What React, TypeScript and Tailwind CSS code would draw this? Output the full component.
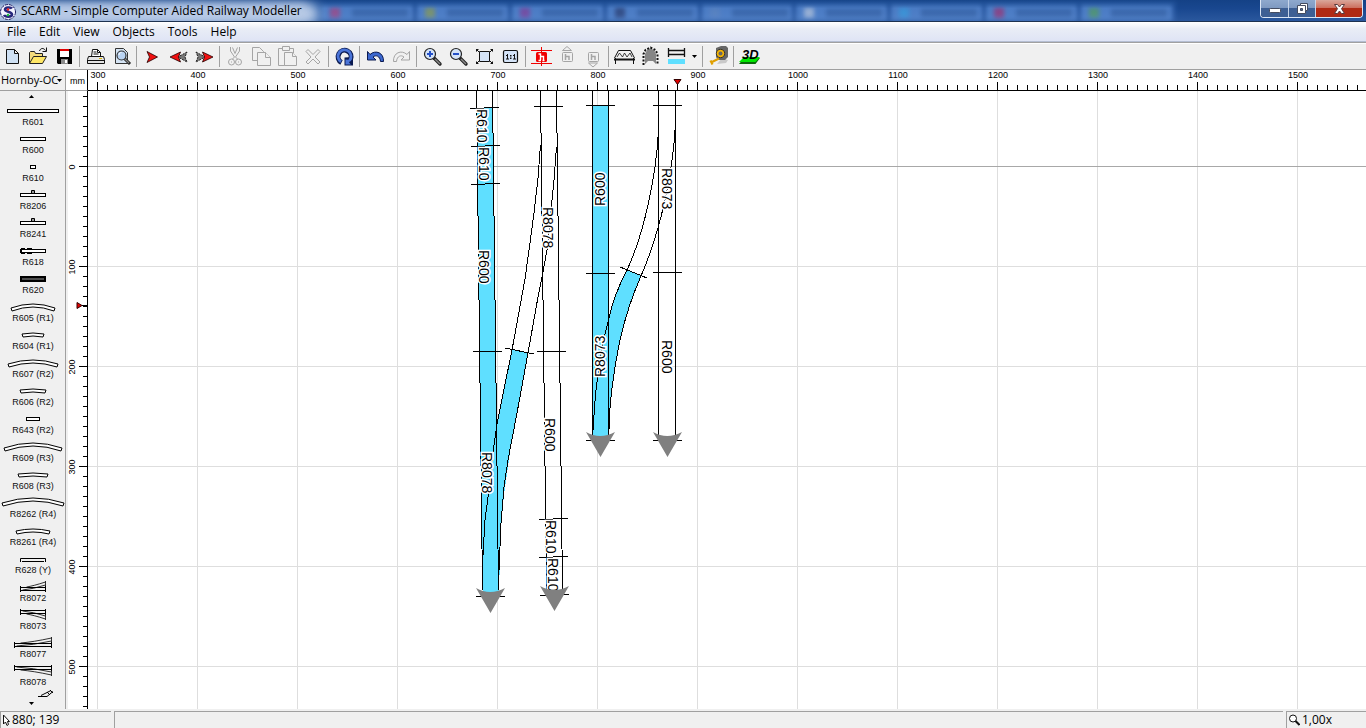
import type { ReactNode } from 'react';

const menuItems = ['File', 'Edit', 'View', 'Objects', 'Tools', 'Help'];

// blurred browser tabs that shine through the glass title bar
const glassTabs = ['#c0306a', '#9aa030', '#902a8a', '#202a58', '#5f83bc', '#cfd5e0', '#2f9fe0', '#b01a5a', '#50a040'];

/* ---------- toolbar icons, 24x24 ---------- */

const GRAY = '#a5a5a5';

function MagnifierIcon({ plus }: { plus?: boolean }) {
  return (
    <>
      <path d="M14 14l6 6" stroke="#222" strokeWidth="3.4" strokeLinecap="round" />
      <path d="M15 15l5 5" stroke="#8a8a8a" strokeWidth="1.4" />
      <circle cx="10" cy="10" r="5.5" fill="#d4e3f7" stroke="#222" strokeWidth="1.2" />
      <path d="M7 10h6" stroke="#2450c8" strokeWidth="2" />
      {plus && <path d="M10 7v6" stroke="#2450c8" strokeWidth="2" />}
    </>
  );
}

const toolGroups: { name: string; icon: ReactNode }[][] = [
  [
    { name: 'New', icon: <path d="M6.5 5.5h8l4 4v10h-12z M14.5 5.5v4h4" fill="#cfe1f4" stroke="#111" /> },
    {
      name: 'Open',
      icon: (
        <>
          <path d="M3.500 19V8.500l1-1h4l1 2h7v3" fill="#f4dc7c" stroke="#222" />
          <path d="M3.500 19.500l4-7h13l-4 7z" fill="#ffe766" stroke="#222" />
          <path d="M13.500 7c1-3 4-3.500 6-.500M20.500 3.500v4h-4" fill="none" stroke="#111" />
        </>
      ),
    },
    {
      name: 'Save',
      icon: (
        <>
          <path d="M5 5h15v15H6l-1-1z" fill="#000" />
          <path d="M8 5h9v2H8z" fill="#e00000" />
          <path d="M8 7h9v6H8z" fill="#fff" />
          <path d="M9 15h7v5H9z" fill="#8a8a8a" />
          <path d="M13 16h2v3h-2z" fill="#fff" />
        </>
      ),
    },
  ],
  [
    {
      name: 'Print',
      icon: (
        <>
          <path d="M8.500 12.500l1-7h5l3 3v4" fill="#fff" stroke="#111" />
          <path d="M10.500 8h3M10.500 10h5M14.500 5.500v3h3" stroke="#111" fill="none" />
          <path d="M5.500 12.500h15l1 3v4h-17v-4z" fill="#e4e4e4" stroke="#111" />
          <path d="M5 16.500h16" stroke="#111" />
          <path d="M16 14.500h3" stroke="#d8b400" />
        </>
      ),
    },
    {
      name: 'Print preview',
      icon: (
        <>
          <path d="M6.500 4.500h8l4 4v11h-12z" fill="#d5e4f4" stroke="#333" />
          <path d="M15 14l6 6" stroke="#222" strokeWidth="3" />
          <path d="M15 14l5 5" stroke="#888" strokeWidth="1.200" />
          <circle cx="12.500" cy="11.500" r="4.500" fill="#b9d3f2" stroke="#333" strokeWidth="1.200" />
          <path d="M10 11c0-1.500 1-2.500 2.500-2.500" stroke="#fff" fill="none" />
        </>
      ),
    },
  ],
  [
    { name: 'Start point', icon: <path d="M7 7.500L17.500 13L7 18.500L9.500 13z" fill="#f01010" stroke="#200" strokeWidth=".8" /> },
    {
      name: 'Previous point',
      icon: (
        <>
          <path d="M21 8L12 13l9 5l-2-5z" fill="#777" stroke="#222" strokeDasharray="2 1" />
          <path d="M14.500 8L4 13l10.500 5l-2-5z" fill="#f01010" stroke="#200" strokeWidth=".8" />
        </>
      ),
    },
    {
      name: 'Next point',
      icon: (
        <>
          <path d="M4 8l9 5l-9 5l2-5z" fill="#777" stroke="#222" strokeDasharray="2 1" />
          <path d="M10.500 8L21 13l-10.500 5l2-5z" fill="#f01010" stroke="#200" strokeWidth=".8" />
        </>
      ),
    },
  ],
  [
    {
      name: 'Cut',
      icon: (
        <g fill="none" stroke={GRAY}>
          <path d="M7.500 3v4l4 6l-2 2M16.500 3v4l-4 6l2 2M9.500 3.500l2.500 6l2.500-6" />
          <circle cx="8.500" cy="18" r="3" />
          <circle cx="15.500" cy="18" r="3" />
          <path d="M8 18h1M15 18h1" />
        </g>
      ),
    },
    {
      name: 'Copy',
      icon: (
        <g fill="#f0f0f0" stroke={GRAY}>
          <path d="M3.500 3.500h7l4 4v9h-11z" />
          <path d="M8.500 8.500h8l5 5v8h-13z" />
          <path d="M16.500 8.500v5h5" />
        </g>
      ),
    },
    {
      name: 'Paste',
      icon: (
        <g fill="#f0f0f0" stroke={GRAY}>
          <path d="M3.500 4.500h15v17h-15z" />
          <path d="M7.500 2.500h7v4h-7z" />
          <path d="M9.500 8.500h8l4 4v9h-12z" />
          <path d="M17.500 8.500v4h4" />
        </g>
      ),
    },
    { name: 'Delete', icon: <path d="M5 7.500l2-2l5 5l5-5l2 2l-5 5.500l5 5l-2 2l-5-5l-5 5l-2-2l5-5z" fill="#f0f0f0" stroke={GRAY} /> },
  ],
  [
    {
      name: 'Rotate',
      icon: (
        <>
          <path d="M9.500 18.500A6.500 6.500 0 1 1 18.500 15.500" stroke="#0a1a50" strokeWidth="5" />
          <path d="M12.500 13.500v8h8.500v-8.500z" fill="#0a1a50" />
          <path d="M9 17.800A6.500 6.500 0 1 1 17.500 16.500" stroke="#4a74d8" strokeWidth="2.800" />
          <path d="M13.500 15.500v5h5.500l-2-2l2-2.500z" fill="#4a74d8" />
        </>
      ),
    },
  ],
  [
    {
      name: 'Undo',
      icon: <path d="M4.500 7.500v8.500h8.500l-3-3c3-2.500 7-1 7.500 4.500h3c.5-9-8-12-13.500-7z" fill="#3c68d0" stroke="#0a1a50" />,
    },
    {
      name: 'Redo',
      icon: <path d="M20.500 7.500v8.500H12l3-3c-3-2.500-7-1-7.500 4.500h-3c-.5-9 8-12 13.500-7z" fill="#f0f0f0" stroke={GRAY} />,
    },
  ],
  [
    { name: 'Zoom in', icon: <MagnifierIcon plus /> },
    { name: 'Zoom out', icon: <MagnifierIcon /> },
    {
      name: 'Fit to window',
      icon: (
        <>
          <path d="M7.500 7.500h10v10h-10z" fill="#d4e3f7" stroke="#111" />
          <path d="M4 5h3l-3 3zM21 5h-3l3 3zM4 20h3l-3-3zM21 20h-3l3-3z" fill="#111" />
          <path d="M4.500 5.500l3 3M20.500 5.500l-3 3M4.500 19.500l3-3M20.500 19.500l-3-3" stroke="#111" />
        </>
      ),
    },
    {
      name: 'Actual size',
      icon: (
        <>
          <rect x="5.500" y="6.500" width="14" height="12" rx="1.500" fill="#d4e3f7" stroke="#111" strokeWidth="1.200" />
          <path d="M8 11.500h1.500M9.500 10v5M8 15h3M15 11.500h1.500M16.500 10v5M15 15h3" stroke="#111" />
          <path d="M12 11h1.500v1.500H12zM12 13.500h1.500V15H12z" fill="#111" />
        </>
      ),
    },
  ],
  [
    {
      name: 'Height',
      icon: (
        <>
          <path d="M2 6.500h21M2 19.500h21M12.500 3v19" stroke="#f00000" />
          <rect x="7" y="8" width="11" height="10" rx="1.500" fill="#f00000" />
          <path d="M9.500 10h2v6M11.500 12.500h3V16M9.500 16.500h2.500M13.500 16.500h2" fill="none" stroke="#fff" strokeWidth="1.400" />
        </>
      ),
    },
    {
      name: 'Raise',
      icon: (
        <g fill="none" stroke={GRAY}>
          <path d="M7.500 6.500l4.500-4l4.500 4z" />
          <rect x="7.500" y="8.500" width="10" height="9" rx="1" />
          <path d="M10.500 10v6M10.500 12.500h3.500V16" strokeWidth="1.500" />
        </g>
      ),
    },
    {
      name: 'Lower',
      icon: (
        <g fill="none" stroke={GRAY}>
          <path d="M7.500 19l4.500 4l4.500-4z" />
          <rect x="7.500" y="8.500" width="10" height="9" rx="1" />
          <path d="M10.500 10v6M10.500 12.500h3.500V16" strokeWidth="1.500" />
        </g>
      ),
    },
  ],
  [
    {
      name: 'Bridge',
      icon: (
        <g fill="none" stroke="#111">
          <path d="M2.500 14l4-7.500h12l4 7.500" />
          <path d="M5 13l2.500-4l3 4l2-4l2.500 4l3-4l2 4" strokeWidth=".8" />
          <path d="M2 15.500h21" strokeWidth="2" />
          <path d="M3.500 14v6M21.500 14v6" />
        </g>
      ),
    },
    {
      name: 'Tunnel',
      icon: (
        <>
          <path d="M7 20V10l2-4l3.500-1.500L16 6l2 4v10l-3-3h-5z" fill="#858585" />
          <path d="M5.500 21V10l2-4l5-2.500l5 2.500l2 4v11" fill="none" stroke="#111" strokeWidth="2" strokeDasharray="2 1.500" />
        </>
      ),
    },
    {
      name: 'Track colour',
      icon: (
        <>
          <path d="M4 6.500h17M4 10.500h17M4.500 4v9M20.500 4v9" stroke="#111" strokeWidth="1.300" />
          <path d="M4 15h17v5H4z" fill="#5fdfff" />
        </>
      ),
    },
  ],
  [
    {
      name: 'Measure',
      icon: (
        <>
          <path d="M11 20l9-1l2-3l-6-2z" fill="#c9c9c9" />
          <path d="M10 4l5-2h5l2 2v9l-3 3h-7l-2-3z" fill="#666" />
          <circle cx="14.500" cy="9.500" r="4.200" fill="#f4b400" stroke="#333" />
          <circle cx="14.500" cy="9.500" r="2" fill="#666" />
          <path d="M13 14.500l-8 4M4.500 16.500l2 4" stroke="#e0a000" strokeWidth="2.200" />
        </>
      ),
    },
  ],
  [
    {
      name: '3D view',
      icon: (
        <>
          <path d="M2 20l5-6h16l-4.500 6z" fill="#0a6a0a" />
          <path d="M2 18l5-5h16l-4.500 5z" fill="#00e800" />
          <text x="5" y="15" className="fill-black font-['Liberation_Sans'] text-[13px] font-bold italic">3D</text>
        </>
      ),
    },
  ],
];

/* ---------- track library, symbols are 66x11 ---------- */

function Straight({ half }: { half: number }) {
  return <rect x={33 - half + 0.5} y="4.500" width={half * 2 - 1} height="3" fill="#fff" stroke="#000" />;
}

function Curve({ half, top, drop }: { half: number; top: number; drop: number }) {
  const l = 33 - half;
  const r = 33 + half;
  const y = top + drop;
  return (
    <path
      d={`M${l} ${y}Q33 ${top - drop} ${r} ${y}l-1 3Q33 ${top - drop + 3} ${l + 1} ${y + 3}z`}
      fill="#fff"
      stroke="#000"
    />
  );
}

function Turnout({ half, up }: { half: number; up?: boolean }) {
  const l = 33 - half + 0.5;
  const r = 33 + half - 0.5;
  return (
    <g transform={up ? undefined : 'matrix(1 0 0 -1 0 11)'} fill="none" stroke="#000">
      <path d={`M${l} 5v6M${r} 5v6M${l} 6.500H${r}M${l} 9.500H${r}`} />
      <path d={`M${l + 2} 9Q33 8 ${r} 4M${l + 6} 6Q33 5 ${r} 1M${r} 0v5`} strokeWidth=".8" />
    </g>
  );
}

const library: { name: string; symbol: ReactNode }[] = [
  { name: 'R601', symbol: <Straight half={26} /> },
  { name: 'R600', symbol: <Straight half={13} /> },
  { name: 'R610', symbol: <Straight half={3} /> },
  { name: 'R8206', symbol: <><Straight half={13} /><path d="M31.500 4V1.500h3V4" fill="#999" stroke="#000" /></> },
  { name: 'R8241', symbol: <><Straight half={13} /><path d="M31.500 4V1.500h3V4" fill="#999" stroke="#000" /></> },
  { name: 'R618', symbol: <><Straight half={13} /><path d="M21 3h4v2h-4zM27 3h5v2h-5zM21 7h4v2h-4zM27 7h5v2h-5zM20 4h2v4h-2z" /></> },
  { name: 'R620', symbol: <><path d="M20 3h26v6H20z" /><path d="M22 6h22" stroke="#999" /></> },
  { name: 'R605 (R1)', symbol: <Curve half={22} top={3} drop={4} /> },
  { name: 'R604 (R1)', symbol: <Curve half={11} top={4} drop={1} /> },
  { name: 'R607 (R2)', symbol: <Curve half={25} top={3} drop={4} /> },
  { name: 'R606 (R2)', symbol: <Curve half={13} top={4} drop={1} /> },
  { name: 'R643 (R2)', symbol: <Straight half={7} /> },
  { name: 'R609 (R3)', symbol: <Curve half={29} top={2} drop={5} /> },
  { name: 'R608 (R3)', symbol: <Curve half={15} top={4} drop={1} /> },
  { name: 'R8262 (R4)', symbol: <Curve half={31} top={1} drop={5} /> },
  { name: 'R8261 (R4)', symbol: <Curve half={17} top={4} drop={2} /> },
  { name: 'R628 (Y)', symbol: <path d="M20.500 9V5.500h25V9M22 8.500h22" fill="none" stroke="#000" /> },
  { name: 'R8072', symbol: <Turnout half={13} up /> },
  { name: 'R8073', symbol: <Turnout half={13} /> },
  { name: 'R8077', symbol: <Turnout half={19} up /> },
  { name: 'R8078', symbol: <Turnout half={19} /> },
];

/* ---------- drawing ---------- */

const steps = Array.from({ length: 400 }, (_, i) => i);
const hundreds = Array.from({ length: 40 }, (_, i) => i * 100);

const trackLabels = [
  { text: 'R610', x: 477, y: 109 },
  { text: 'R610', x: 479, y: 147 },
  { text: 'R600', x: 479, y: 250 },
  { text: 'R8078', x: 482, y: 452 },
  { text: 'R8078', x: 543, y: 207 },
  { text: 'R600', x: 545, y: 418 },
  { text: 'R610', x: 546, y: 520 },
  { text: 'R610', x: 548, y: 558 },
  { text: 'R600', x: 605, y: 206, up: true },
  { text: 'R8073', x: 605, y: 377, up: true },
  { text: 'R8073', x: 662, y: 168 },
  { text: 'R600', x: 662, y: 340 },
];

// x, y of the left corner
const trackEnds = [[476, 588], [540, 586], [586, 432], [653, 432]];

function Plan() {
  return (
    <svg className="h-full w-full bg-white" aria-label="Track plan">
      <g shapeRendering="crispEdges">
        {hundreds.map((n) => <rect key={n} x={n + 9} y="0" width="1" height="100%" fill="#dedede" />)}
        {hundreds.map((n) => <rect key={n} x="0" y={n + 75} width="100%" height="1" fill={n ? '#dedede' : '#a8a8a8'} />)}
      </g>
      <g transform="translate(-88 -91)">
        <g shapeRendering="crispEdges" fill="none" stroke="#000">
          <g fill="#5fdfff" stroke="none">
            <path d="M477 108L493 107L499 592H483z" />
            <path d="M512 350L503 394L497 424L490 480L485 520L483 592H499L501 523L505 487L511 446L517 413L528 353z" />
            <path d="M592 105h17v331h-17z" />
            <path d="M627 270C619 285 612 303 608 322C600 352 594 395 593 435H609C609 405 614 368 620 340C625 318 633 294 641 276z" />
          </g>
          <path d="M476.500 90L482.500 590M492.500 90L498.500 590M540.500 90L546.500 590M556.500 90L562.500 590" />
          <path d="M592.500 90V435M608.500 90V435M658.500 90V435M675.500 90V435" />
          <path d="M512 350L503 394L497 424L493 452L488 497L485 520L483 555M528 353L517 413L508 460L504 487L501 523L499 571" />
          <path d="M540.500 145L538 178L534 213L529 250L525 279L512 350M556.500 147L554 180L552 200L547 250L543 272L538 297L528 353" />
          <path d="M627 270C619 285 612 303 608 322C600 352 594 395 593.500 430M641 276C633 294 625 318 620 340C614 368 609 405 609 430" />
          <path d="M658.500 130C656 180 643 236 627 270M675.500 123C673 175 660 232 641 276" />
          <path d="M470 108.500L499 107.500M471 146.500L500 145.500M471 184.500L500 183.500M473 351.500h29M476 596.500h29" />
          <path d="M534 106.500h29M537 351.500h29M539 519.500L568 518.500M539 557.500L568 556.500M540 595.500L569 594.500M505 348L534 354" />
          <path d="M586 105.500h29M586 273.500h29M586 440.500h29M620 267L647 278M653 105.500h29M653 272.500h29M653 440.500h29" />
        </g>
        {trackLabels.map((l, i) => (
          <text
            key={i}
            transform={`translate(${l.x} ${l.y}) rotate(${l.up ? -90 : 90})`}
            className="fill-black stroke-white stroke-[3px] font-['Liberation_Sans'] text-[14px] [paint-order:stroke]"
          >
            {l.text}
          </text>
        ))}
        {trackEnds.map(([x, y]) => (
          <path key={x} d={`M${x} ${y}q14 8 29 0l-14.500 25z`} fill="#808080" />
        ))}
      </g>
    </svg>
  );
}

function TopRuler() {
  return (
    <svg className="h-full w-full bg-white font-['Liberation_Sans'] text-[9px]" aria-label="Horizontal ruler">
      <g shapeRendering="crispEdges">
        <rect x="0" y="20" width="100%" height="1" />
        {steps.map((i) => <rect key={i} x={9 + i * 10} y={i % 10 ? 15 : 12} width="1" height={i % 10 ? 5 : 8} />)}
      </g>
      {hundreds.slice(0, 13).map((n) => <text key={n} x={n + 10} y="8" textAnchor="middle">{300 + n}</text>)}
      <path d="M586 9.500h7l-3.500 5z" fill="#e00000" stroke="#300" />
      <path d="M589.500 14v6" stroke="#000" />
    </svg>
  );
}

function SideRuler() {
  return (
    <svg className="h-full w-full bg-white font-['Liberation_Sans'] text-[9px]" aria-label="Vertical ruler">
      <g shapeRendering="crispEdges">
        <rect x="0" y="0" width="2" height="100%" fill="#f0f0f0" />
        <rect x="21" y="0" width="1" height="100%" />
        {steps.map((i) => <rect key={i} x={i % 10 === 7 ? 13 : 17} y={5 + i * 10} width={i % 10 === 7 ? 8 : 4} height="1" />)}
      </g>
      {hundreds.slice(0, 6).map((n) => (
        <text key={n} transform={`translate(9 ${n + 76}) rotate(-90)`} textAnchor="middle">{n}</text>
      ))}
      <path d="M11 211.500v6l5-3z" fill="#e00000" stroke="#300" />
      <path d="M16 214.500h5" stroke="#000" />
    </svg>
  );
}

/* ---------- window parts ---------- */

function TitleBar() {
  return (
    <header className="relative flex h-[22px] shrink-0 overflow-hidden border-b border-[#1d3250] bg-[#19478f]">
      <div className="absolute inset-y-0 right-[190px] left-0 flex bg-[#2c60ab] pt-1 pl-[322px] blur-[2px]">
        {glassTabs.map((color, i) => (
          <span key={i} className="flex flex-1 items-center gap-3 border-r-4 border-[#24539c] bg-[#4a7bc4] pl-2">
            <span className="size-[10px] opacity-60" style={{ backgroundColor: color }} />
            <span className="h-2 w-14 bg-[#264f90] opacity-50" />
          </span>
        ))}
      </div>
      <div className="absolute inset-0 bg-linear-to-b from-[#123f82]/70 via-transparent via-40% to-[#6f9ad8]/20" />
      <div className="absolute top-1 -left-4 h-5 w-[335px] rounded-full bg-[#b9cbe6] blur-[6px]" />
      <div className="absolute top-1 -left-4 h-4 w-[325px] rounded-full bg-[#b9cbe6]/80 blur-[4px]" />
      <div className="relative flex flex-1 items-center gap-1">
        <svg width="17" height="18" viewBox="0 0 17 18">
          <circle cx="8" cy="10" r="7.500" fill="#f4f4ff" stroke="#1c1c60" strokeDasharray="3 1" />
          <path d="M12 6.500C11 5 5 5 5 7.500S12 9.500 12 12.500S5 15 4 13" fill="none" stroke="#28287c" strokeWidth="2.600" />
          <circle cx="8" cy="7.500" r="1.300" fill="#f02020" />
          <circle cx="8" cy="13" r="1.300" fill="#20c040" />
        </svg>
        <h1 className="text-[12px] leading-5 whitespace-nowrap text-black">SCARM - Simple Computer Aided Railway Modeller</h1>
      </div>
      <div className="relative mr-[3px] flex h-[18px] w-[103px] overflow-hidden rounded-b border border-t-0 border-[#dbe6f5] bg-[#22304c]">
        <button aria-label="Minimize" className="flex w-7 items-end justify-center border-r border-[#c7d5ea] bg-linear-to-b from-[#8fa9cd] via-[#7f9ac2] via-45% to-[#3d5f94] to-50% pb-1">
          <svg width="12" height="5"><rect x=".5" y=".5" width="11" height="4" rx="1" fill="#fff" stroke="#444c60" /></svg>
        </button>
        <button aria-label="Restore" className="flex w-[27px] items-center justify-center border-r border-[#c7d5ea] bg-linear-to-b from-[#8fa9cd] via-[#7f9ac2] via-45% to-[#3d5f94] to-50%">
          <svg width="13" height="13">
            <path d="M4.500 1.500h7v7h-2v3h-8v-8h3z" fill="#fff" stroke="#444c60" />
            <path d="M9.500 8.500v-5h-5" fill="none" stroke="#444c60" />
            <path d="M4.500 6.500h2v2h-2z" fill="#50709f" stroke="#444c60" />
          </svg>
        </button>
        <button aria-label="Close" className="flex flex-1 items-center justify-center bg-linear-to-b from-[#d9a79b] via-[#cc7060] via-45% to-[#b02a14] to-50%">
          <svg width="13" height="12">
            <path d="M1.500 1.500h3l2 2.500l2-2.500h3L8.500 5.700l3 4.800h-3l-2-2.500l-2 2.500h-3l3-4.800z" fill="#fff" stroke="#5a3a3c" />
          </svg>
        </button>
      </div>
    </header>
  );
}

function MenuBar() {
  return (
    <nav className="flex h-5 shrink-0 items-center gap-[13px] border-b border-[#b5bed2] bg-linear-to-b from-white via-[#e9edf6] via-35% to-[#dfe4f5] to-100% pl-[7px] text-[12px]">
      {menuItems.map((item) => <button key={item} className="leading-4">{item}</button>)}
    </nav>
  );
}

function Toolbar() {
  return (
    <div role="toolbar" className="-ml-px flex h-7 shrink-0 items-center overflow-hidden border-t border-b border-[#a0a0a0] shadow-[inset_0_1px_0_#fff]">
      {toolGroups.map((group, g) => (
        <div key={g} className="flex shrink-0 items-center">
          {g > 0 && <span className="mx-[2px] h-[21px] w-px bg-[#a0a0a0]" />}
          {group.map((tool) => (
            <button key={tool.name} aria-label={tool.name} title={tool.name} className="flex w-[26px] justify-center">
              <svg width="24" height="24" fill="none">{tool.icon}</svg>
            </button>
          ))}
          {g === 8 && (
            <button aria-label="Track colour options" className="flex w-[11px] justify-center">
              <svg width="5" height="3"><path d="M0 0h5L2.500 3z" /></svg>
            </button>
          )}
        </div>
      ))}
    </div>
  );
}

function Library() {
  return (
    <aside className="row-span-2 flex min-h-0 flex-col overflow-hidden border-r border-[#a0a0a0]">
      <div className="relative h-[21px] shrink-0 border-b border-[#a0a0a0]">
        <select aria-label="Track library" className="block h-5 w-full appearance-none bg-transparent pl-px text-[11px] outline-none">
          <option>Hornby-OC</option>
        </select>
        <svg className="pointer-events-none absolute top-[9px] right-[3px]" width="5" height="3"><path d="M0 0h5L2.500 3z" /></svg>
      </div>
      <button aria-label="Scroll up" className="flex h-[14px] shrink-0 items-center justify-center pr-[2px] pb-[3px]">
        <svg width="5" height="3"><path d="M0 3h5L2.500 0z" /></svg>
      </button>
      <ul className="min-h-0 flex-1 overflow-hidden pl-px font-['Liberation_Sans'] text-[9px] leading-3 text-[#111]">
        {library.map((track) => (
          <li key={track.name} className="flex h-7 flex-col items-center whitespace-nowrap">
            <svg className="shrink-0 overflow-visible" width="66" height="11">{track.symbol}</svg>
            {track.name}
          </li>
        ))}
        <li>
          <svg className="overflow-visible" width="66" height="11" fill="none" stroke="#000">
            <path d="M37 3.500h9l6-5M40 2.500l10-5M49 -3l3 3M46 -1l3 3" />
          </svg>
        </li>
      </ul>
      <button aria-label="Scroll down" className="flex h-3 shrink-0 items-center justify-center pr-[2px]">
        <svg width="5" height="3"><path d="M0 0h5L2.500 3z" /></svg>
      </button>
    </aside>
  );
}

function StatusBar() {
  const pane = 'flex items-center border-t border-l border-[#a0a0a0] text-[12px] leading-4';
  return (
    <footer className="flex h-[19px] shrink-0 gap-[3px] pt-[2px]">
      <div className={`${pane} w-[111px] gap-[2px] pl-[2px]`}>
        <svg width="7" height="12"><path d="M.5 1v9l2-2l1.500 3.500l1.500-1L4.500 7.500h2z" fill="#fff" stroke="#111" /></svg>
        <span>880; 139</span>
      </div>
      <div className={`${pane} flex-1`} />
      <div className={`${pane} w-20 gap-[2px] pl-[2px]`}>
        <svg width="11" height="12" fill="none" stroke="#111">
          <circle cx="4" cy="4.500" r="3.500" fill="#fff" />
          <path d="M6.500 7l4 4" strokeWidth="2" />
        </svg>
        <span>1,00x</span>
      </div>
    </footer>
  );
}

export default function App() {
  return (
    <div className="flex h-screen flex-col overflow-hidden bg-[#f0f0f0] font-['Open_Sans',sans-serif] text-black">
      <TitleBar />
      <MenuBar />
      <Toolbar />
      <main className="grid min-h-0 flex-1 grid-cols-[66px_22px_minmax(0,1fr)] grid-rows-[21px_minmax(0,1fr)]">
        <Library />
        <div className="border-r border-b border-r-black border-b-[#a0a0a0] bg-white pt-[3px] pl-1 font-['Liberation_Sans'] text-[9px] leading-4">mm</div>
        <TopRuler />
        <SideRuler />
        <Plan />
      </main>
      <StatusBar />
    </div>
  );
}
